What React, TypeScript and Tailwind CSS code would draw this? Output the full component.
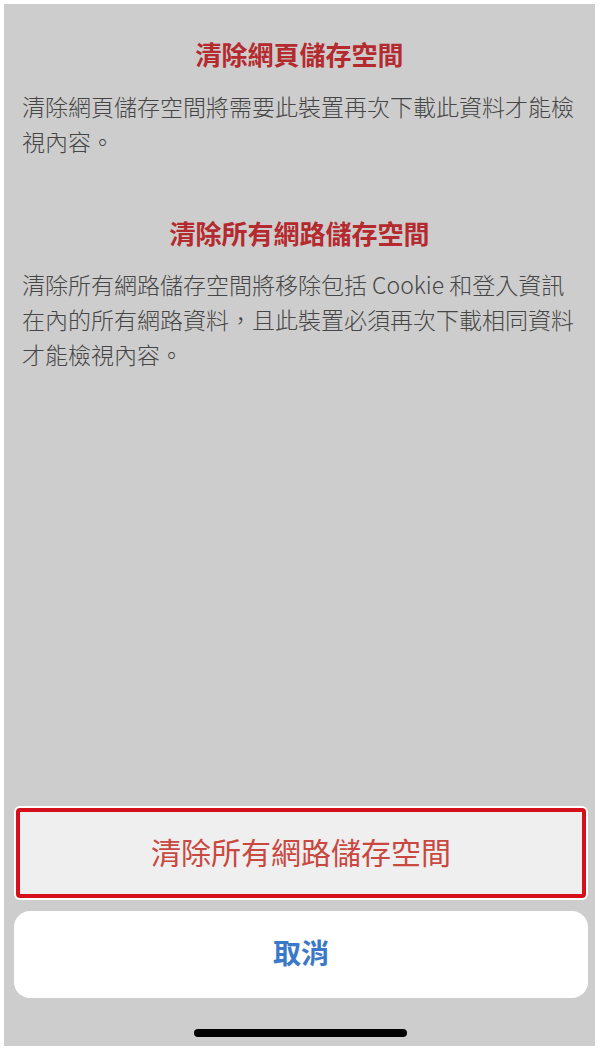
import React from 'react'

const font = { fontFamily: '"Noto Sans CJK TC", "Noto Sans", sans-serif' }

const App = () => {
  return (
    <div className="w-[600px] h-[1050px] bg-white pt-[4px] pl-[4px] pr-[5px] pb-[4px]" style={font}>
      <div className="w-full h-full bg-[#cdcdcd] flex flex-col">
        <section className="flex flex-col pt-[34px] text-[#464646]">
          <h2 className="text-center text-[26px] leading-[32px] font-bold text-[#b52a2e]">
            清除網頁儲存空間
          </h2>
          <p className="mt-[19px] pl-[18px] w-[578px] text-[23px] leading-[35px] font-light">
            清除網頁儲存空間將需要此裝置再次下載此資料才能檢視內容。
          </p>
          <h2 className="mt-[58px] text-center text-[26px] leading-[32px] font-bold text-[#b52a2e]">
            清除所有網路儲存空間
          </h2>
          <p className="mt-[18px] pl-[18px] w-[578px] text-[23px] leading-[35px] font-light">
            清除所有網路儲存空間將移除包括 Cookie 和登入資訊在內的所有網路資料，且此裝置必須再次下載相同資料才能檢視內容。
          </p>
        </section>

        <div className="flex-1" />

        <div className="flex flex-col ml-[10px] mr-[7px]">
          <button className="h-[94px] rounded-[6px] bg-white p-[2px]">
            <div className="h-full rounded-[4px] border-[4px] border-[#d6101a] bg-[#efefef] flex items-center justify-center pb-[4px]">
              <span className="text-[30px] text-[#c9483f]">清除所有網路儲存空間</span>
            </div>
          </button>
          <button className="mt-[11px] h-[87px] rounded-[16px] bg-white flex items-center justify-center pb-[5px]">
            <span className="text-[28px] font-bold text-[#3a78c8]">取消</span>
          </button>
        </div>

        <div className="flex justify-center pt-[31px] pb-[9px] pl-[2px]">
          <div className="w-[213px] h-[8px] rounded-full bg-black" />
        </div>
      </div>
    </div>
  )
}

export default App
